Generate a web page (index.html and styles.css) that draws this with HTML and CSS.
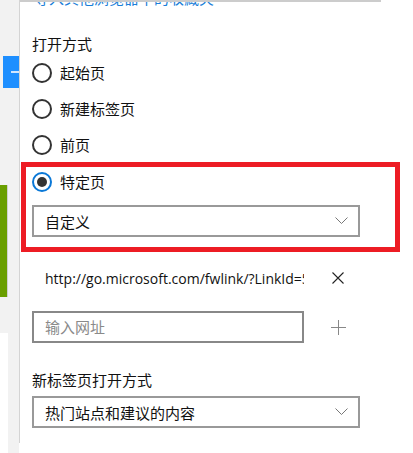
FILE: index.html
```html
<!DOCTYPE html>
<html lang="zh-CN">
<head>
  <meta charset="UTF-8">
  <title>打开方式</title>
  <link rel="stylesheet" href="styles.css">
</head>
<body>
  <div class="window">
    <div class="rail">
      <div class="rail-tab"><span class="rail-dash"></span></div>
      <div class="rail-tile"></div>
      <div class="rail-blank"></div>
    </div>

    <div class="panel">
      <div class="panel-head">
        <a class="import-link">导入其他浏览器中的收藏夹</a>
      </div>

      <div class="section-title">打开方式</div>
      <label class="radio"><span class="dot"></span>起始页</label>
      <label class="radio"><span class="dot"></span>新建标签页</label>
      <label class="radio"><span class="dot"></span>前页</label>

      <div class="highlight">
        <label class="radio checked"><span class="dot"></span>特定页</label>
        <div class="select">
          <span>自定义</span>
          <svg class="chevron" width="13" height="8" viewBox="0 0 13 8"><path d="M0.5 0.5 L6.5 6.5 L12.5 0.5" fill="none" stroke="#777" stroke-width="1"/></svg>
        </div>
      </div>

      <div class="url-row">
        <span class="url">http://go.microsoft.com/fwlink/?LinkId=517287</span>
        <svg class="icon-btn" width="12" height="12" viewBox="0 0 12 12"><path d="M0.5 0.5 L11.5 11.5 M11.5 0.5 L0.5 11.5" stroke="#222" stroke-width="1.1"/></svg>
      </div>

      <div class="add-row">
        <div class="input">输入网址</div>
        <svg class="icon-btn" width="15" height="15" viewBox="0 0 15 15"><path d="M7.5 0 V15 M0 7.5 H15" stroke="#888" stroke-width="1"/></svg>
      </div>

      <div class="section-title second">新标签页打开方式</div>
      <div class="select wide">
        <span>热门站点和建议的内容</span>
        <svg class="chevron" width="13" height="8" viewBox="0 0 13 8"><path d="M0.5 0.5 L6.5 6.5 L12.5 0.5" fill="none" stroke="#777" stroke-width="1"/></svg>
      </div>
    </div>
  </div>
</body>
</html>
```

FILE: styles.css
```css
html, body {
  margin: 0;
  padding: 0;
  width: 413px;
  height: 453px;
  overflow: hidden;
  background: #fff;
  font-family: "Noto Sans CJK SC", "Noto Sans", sans-serif;
  font-size: 15px;
  color: #111;
}
.window {
  display: flex;
  height: 453px;
}
.rail {
  width: 19px;
  flex-shrink: 0;
  background: #f2f2f2;
  display: flex;
  flex-direction: column;
}
.rail-tab {
  margin: 56px 0 0 3px;
  height: 32px;
  background: #1e8fff;
  display: flex;
  align-items: center;
  justify-content: flex-end;
}
.rail-dash {
  width: 8px;
  height: 2px;
  background: #cfe6ff;
}
.rail-tile {
  margin-top: 97px;
  width: 7px;
  height: 112px;
  background: #6a9f00;
  border-right: 1px solid #d0d0d0;
}
.rail-blank {
  margin-top: 36px;
  width: 8px;
  flex: 1;
  background: #fff;
}
.panel {
  flex: 1;
  overflow: hidden;
  padding-left: 12px;
  border-left: 1px solid #d4d4d4;
  height: 443px;
}
.panel-head {
  width: 347px;
  margin-left: -12px;
  padding-left: 14px;
  height: 6px;
  border-top: 2px solid #cccccc;
  overflow: hidden;
}
.import-link {
  display: block;
  color: #1a7fd9;
  font-size: 15px;
  line-height: 20px;
  margin-top: -14px;
}
.section-title {
  margin-top: 26px;
  line-height: 20px;
  height: 20px;
}
.section-title.second {
  margin-top: 27px;
}
.radio {
  display: flex;
  align-items: center;
  gap: 8px;
  height: 20px;
  margin-top: 16px;
  line-height: 20px;
}
.section-title + .radio {
  margin-top: 9px;
}
.dot {
  width: 20px;
  height: 20px;
  box-sizing: border-box;
  border: 2px solid #333;
  border-radius: 50%;
  display: flex;
  align-items: center;
  justify-content: center;
}
.radio.checked .dot {
  border-color: #0a78d7;
}
.radio.checked .dot::after {
  content: "";
  width: 10px;
  height: 10px;
  border-radius: 50%;
  background: #333;
}
.highlight {
  margin: 7px 0 0 -11px;
  width: 379px;
  box-sizing: border-box;
  border: 5px solid #ed1c24;
  padding: 0 0 10px 6px;
}
.highlight .radio {
  margin-top: 5px;
}
.select {
  width: 328px;
  height: 32px;
  box-sizing: border-box;
  border: 2px solid #999;
  display: flex;
  align-items: center;
  justify-content: space-between;
  padding: 0 10px 0 11px;
}
.highlight .select {
  margin-top: 13px;
}
.select.wide {
  margin-top: 6px;
}
.url-row {
  display: flex;
  align-items: center;
  height: 20px;
  margin-top: 16px;
}
.url {
  width: 259px;
  margin-left: 13px;
  overflow: hidden;
  white-space: nowrap;
  font-family: "Open Sans", "Noto Sans", sans-serif;
  font-size: 14px;
}
.url-row .icon-btn {
  margin-left: 28px;
}
.add-row {
  display: flex;
  align-items: center;
  margin-top: 23px;
}
.input {
  width: 272px;
  height: 32px;
  box-sizing: border-box;
  border: 2px solid #888;
  padding-left: 11px;
  line-height: 28px;
  color: #8a8a8a;
}
.add-row .icon-btn {
  margin-left: 27px;
}
```
